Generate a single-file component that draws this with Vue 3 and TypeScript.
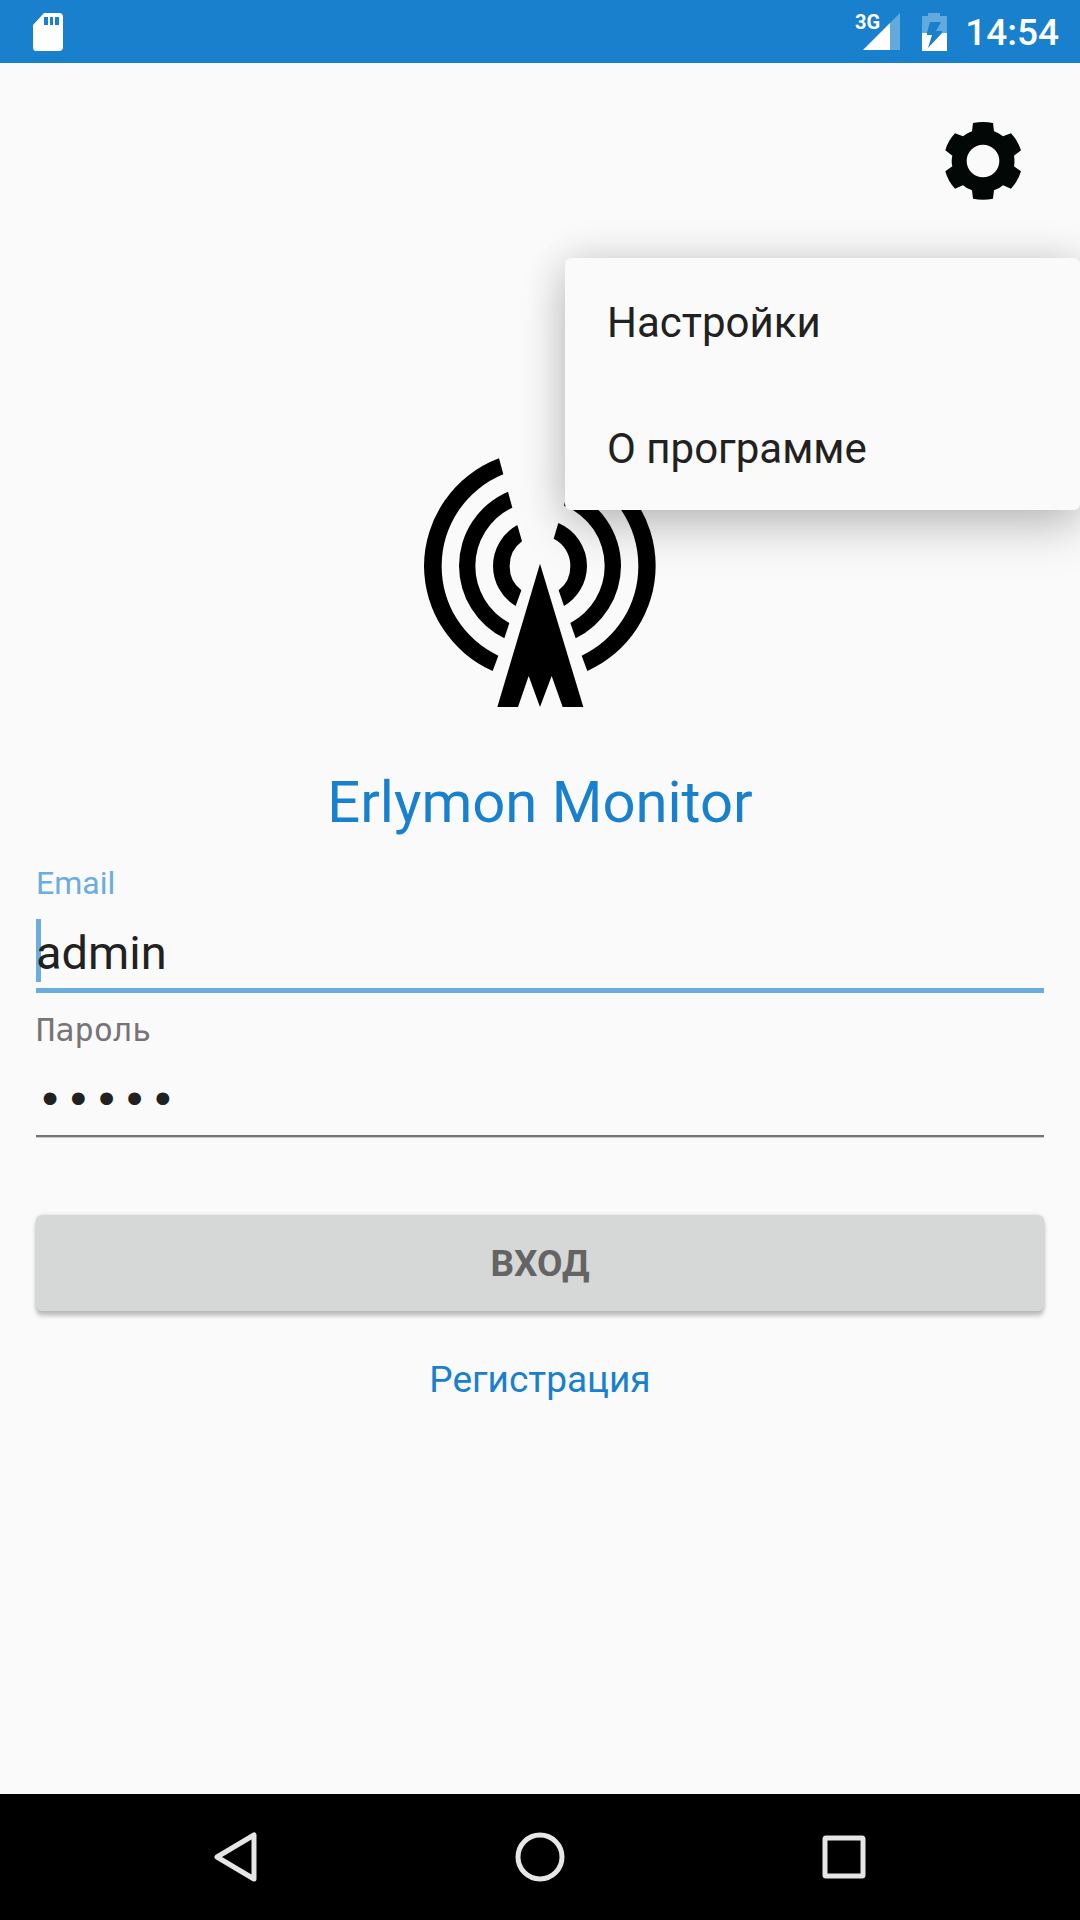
<script setup lang="ts">
import { ref } from 'vue'

const email = ref('admin')
const password = ref('admin')
const menuOpen = ref(true)
const menuItems: string[] = ['Настройки', 'О программе']
</script>

<template>
  <div class="screen">
    <header class="status-bar">
      <svg class="sd-card" width="32" height="40" viewBox="0 0 32 40" aria-hidden="true">
        <path fill="#fff" fill-rule="evenodd" d="M12 1H27Q31 1 31 5V35Q31 39 27 39H4Q1 39 1 35V13ZM12 5V13H16V5ZM18 5V13H21V5ZM23 5V13H27V5Z" />
      </svg>
      <div class="status-right">
        <div class="signal">
          <span class="network">3G</span>
          <svg width="38" height="38" viewBox="0 0 38 38" aria-hidden="true">
            <path fill="#fff" fill-opacity=".32" d="M37 0V37H27V10Z" />
            <path fill="#fff" d="M0 37L27 10V37Z" />
          </svg>
        </div>
        <svg class="battery" width="25" height="38" viewBox="0 0 25 38" aria-hidden="true">
          <path fill="#fff" fill-opacity=".32" d="M6 0H18V3H25V20H20L20 18L14 18L19 9H8L5 20H0V3H6Z" />
          <path fill="#fff" fill-rule="evenodd" d="M0 20H5V22H10L6 35L20 20H25V38H0Z" />
        </svg>
        <time class="clock">14:54</time>
      </div>
    </header>

    <main class="content">
      <div class="toolbar">
        <button class="gear" type="button" aria-label="Меню" @click="menuOpen = !menuOpen">
          <svg width="80" height="80" viewBox="68 62 240 240" aria-hidden="true">
            <path
              fill="#030706"
              fill-rule="evenodd"
              d="M158 68Q188 62 218 68L221 93Q236 98 248 108L272 99Q293 121 302 150L281 166Q284 182 281 198L302 213Q293 243 272 265L248 255Q236 266 221 270L218 295Q188 301 158 295L155 270Q140 266 128 255L104 265Q83 243 75 213L96 198Q92 182 96 166L75 150Q83 121 104 99L128 108Q140 98 155 93ZM188 133A49 49 0 1 0 188 231A49 49 0 1 0 188 133Z"
            />
          </svg>
        </button>
        <div v-if="menuOpen" class="menu" role="menu">
          <button v-for="item in menuItems" :key="item" class="menu-item" type="button" role="menuitem">
            {{ item }}
          </button>
        </div>
      </div>

      <svg class="logo" width="232" height="252" viewBox="43 45 696 756" aria-hidden="true">
        <path d="M268 55A347 347 0 0 0 43 378A347 347 0 0 0 249 693L266 647A296 296 0 0 1 96 378A296 296 0 0 1 281 103Z" />
        <path d="M295 155A243 243 0 0 0 148 378A243 243 0 0 0 284 595L299 549A194 194 0 0 1 197 378A194 194 0 0 1 308 203Z" />
        <path d="M323 255A141 141 0 0 0 250 378A141 141 0 0 0 318 498L335 451A91 91 0 0 1 300 378A91 91 0 0 1 337 304Z" />
        <path d="M446 249A141 141 0 0 1 532 378A141 141 0 0 1 463 498L447 451A91 91 0 0 0 482 378A91 91 0 0 0 432 296Z" />
        <path d="M475 150A243 243 0 0 1 634 378A243 243 0 0 1 498 595L482 549A194 194 0 0 0 585 378A194 194 0 0 0 463 197Z" />
        <path d="M510 52A347 347 0 0 1 738 378A347 347 0 0 1 533 693L516 647A296 296 0 0 0 686 378A296 296 0 0 0 497 101Z" />
        <path d="M391 371L521 801H459L426 708L391 801L357 708L325 801H263Z" />
      </svg>

      <h1 class="title">Erlymon Monitor</h1>

      <form class="form" @submit.prevent>
        <div class="field active">
          <label for="email">Email</label>
          <input id="email" v-model="email" type="text" autocomplete="off" />
        </div>
        <div class="field secret">
          <label for="password">Пароль</label>
          <input id="password" v-model="password" type="password" autocomplete="off" />
        </div>
        <button class="submit" type="submit">ВХОД</button>
      </form>

      <a class="register" href="#register">Регистрация</a>
    </main>

    <nav class="nav-bar">
      <button type="button" aria-label="Назад">
        <svg width="52" height="52" viewBox="0 0 52 52">
          <path d="M44 4V48L7 26Z" />
        </svg>
      </button>
      <button type="button" aria-label="Домой">
        <svg width="52" height="52" viewBox="0 0 52 52">
          <circle cx="26" cy="26" r="22" />
        </svg>
      </button>
      <button type="button" aria-label="Обзор">
        <svg width="52" height="52" viewBox="0 0 52 52">
          <rect x="7" y="7" width="38" height="38" rx="1" />
        </svg>
      </button>
    </nav>
  </div>
</template>

<style>
body {
  margin: 0;
  background: #fafafa;
}
</style>

<style scoped>
.screen {
  display: flex;
  flex-direction: column;
  min-height: 100vh;
  background: #fafafa;
  color: #212121;
  font-family: Roboto, 'Noto Sans', sans-serif;
}

button {
  padding: 0;
  border: 0;
  background: none;
  color: inherit;
  font: inherit;
}

svg {
  display: block;
}

.status-bar {
  display: flex;
  align-items: center;
  justify-content: space-between;
  height: 63px;
  padding: 0 21px 0 32px;
  background: #1880cd;
  color: #fff;
}

.status-right {
  display: flex;
  align-items: center;
}

.signal {
  position: relative;
  margin-right: 21px;
}

.network {
  position: absolute;
  top: -2px;
  right: 21px;
  font-size: 20px;
  line-height: 22px;
  font-weight: 700;
}

.battery {
  margin-right: 18px;
}

.clock {
  padding-top: 2px;
  font-size: 37px;
  line-height: 44px;
  font-weight: 500;
}

.content {
  display: flex;
  flex: 1;
  flex-direction: column;
  align-items: center;
}

.toolbar {
  position: relative;
  display: flex;
  justify-content: flex-end;
  align-self: stretch;
  padding: 58px 57px 0;
}

.menu {
  position: absolute;
  top: 195px;
  right: 0;
  display: flex;
  flex-direction: column;
  width: 515px;
  border-radius: 6px;
  background: #fafafa;
  box-shadow: 0 0 40px rgba(0, 0, 0, 0.14), 0 20px 48px rgba(0, 0, 0, 0.18);
}

.menu-item {
  height: 126px;
  padding: 4px 42px 0;
  font-size: 42px;
  line-height: 50px;
  text-align: left;
}

.logo {
  margin-top: 254px;
}

.title {
  margin: 61px 0 29px;
  color: #1880cd;
  font-size: 58px;
  line-height: 68px;
  font-weight: 400;
}

.form {
  display: flex;
  flex-direction: column;
  align-self: stretch;
  padding: 0 36px;
}

.field {
  display: flex;
  flex-direction: column;
}

.field label {
  color: #757575;
  font-size: 32px;
  line-height: 36px;
}

.field input {
  box-sizing: border-box;
  width: 100%;
  height: 92px;
  padding: 16px 0 0;
  border: 0;
  border-bottom: 5px solid #6badde;
  border-radius: 0;
  outline: 0;
  background: none;
  color: #212121;
  font-family: inherit;
  font-size: 47px;
}

.active label {
  color: #6badde;
}

/* The thick text cursor stands behind the first letter. */
.active input {
  background: linear-gradient(#6badde, #6badde) 0 18px / 5px 63px no-repeat;
}

.secret {
  margin-top: 19px;
  font-family: 'DejaVu Sans Mono', monospace;
}

.secret input {
  height: 89px;
  padding-top: 20px;
  border-bottom: 2px solid #757575;
  box-shadow: 0 1px #c8c8c8;
  font-family: 'Liberation Mono', monospace;
}

.submit {
  height: 96px;
  margin-top: 78px;
  padding-top: 2px;
  border-radius: 6px;
  background: #d6d8d7;
  box-shadow: 0 5px 4px rgba(0, 0, 0, 0.22), 0 0 4px rgba(0, 0, 0, 0.12);
  color: #636463;
  font-size: 37px;
  line-height: 44px;
  font-weight: 700;
}

.register {
  margin-top: 47px;
  color: #1880cd;
  font-size: 37px;
  line-height: 44px;
  text-decoration: none;
}

.nav-bar {
  display: flex;
  height: 126px;
  padding: 0 84px;
  background: #000;
}

.nav-bar button {
  display: flex;
  flex: 1;
  align-items: center;
  justify-content: center;
}

.nav-bar svg {
  fill: none;
  stroke: #e6e6e6;
  stroke-width: 5;
  stroke-linejoin: round;
}
</style>
